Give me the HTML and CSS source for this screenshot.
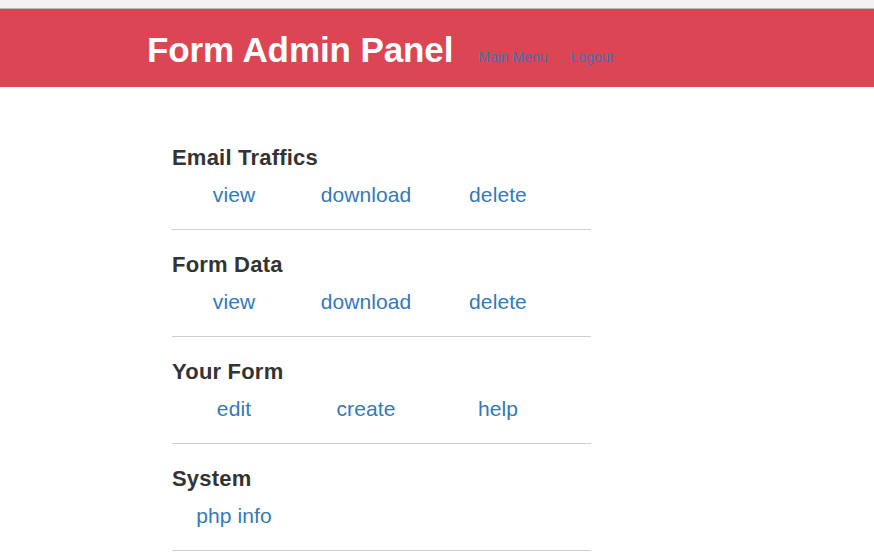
FILE: index.html
```html
<!DOCTYPE html>
<html lang="en">
<head>
<meta charset="utf-8">
<title>Form Admin Panel</title>
<link rel="stylesheet" href="styles.css">
</head>
<body>
<div class="topstrip"></div>
<header class="header">
  <h1 class="title">Form Admin Panel</h1>
  <nav class="nav">
    <a href="#" class="nav-link">Main Menu</a>
    <a href="#" class="nav-link">Logout</a>
  </nav>
</header>
<main class="main">
  <section class="section">
    <h2 class="section-title">Email Traffics</h2>
    <div class="links">
      <a href="#" class="link">view</a>
      <a href="#" class="link">download</a>
      <a href="#" class="link">delete</a>
    </div>
  </section>
  <section class="section">
    <h2 class="section-title">Form Data</h2>
    <div class="links">
      <a href="#" class="link">view</a>
      <a href="#" class="link">download</a>
      <a href="#" class="link">delete</a>
    </div>
  </section>
  <section class="section">
    <h2 class="section-title">Your Form</h2>
    <div class="links">
      <a href="#" class="link">edit</a>
      <a href="#" class="link">create</a>
      <a href="#" class="link">help</a>
    </div>
  </section>
  <section class="section">
    <h2 class="section-title">System</h2>
    <div class="links">
      <a href="#" class="link">php info</a>
    </div>
  </section>
</main>
</body>
</html>
```

FILE: styles.css
```css
html, body {
  margin: 0;
  padding: 0;
  background: #ffffff;
  font-family: "Liberation Sans", Arial, sans-serif;
}

.topstrip {
  height: 8px;
  background: #f2f2f2;
  border-bottom: 1px solid #b9b9b9;
}

.header {
  height: 78px;
  background: #db4554;
  display: flex;
  align-items: baseline;
  padding: 23px 0 0 147px;
  box-sizing: border-box;
}

.title {
  margin: 0;
  font-size: 35px;
  line-height: 35px;
  font-weight: bold;
  color: #ffffff;
  letter-spacing: -0.1px;
}

.nav {
  display: flex;
  gap: 23px;
  margin-left: 25px;
}

.nav-link {
  font-size: 14px;
  color: #4670b3;
  text-decoration: none;
}

.main {
  padding-top: 36px;
  margin-left: 172px;
  width: 419px;
}

.section {
  padding: 22px 0 21px;
  border-bottom: 1px solid #cfcfcf;
}

.section-title {
  margin: 0 0 11px;
  font-size: 22px;
  line-height: 26px;
  font-weight: bold;
  color: #333333;
  letter-spacing: 0.2px;
}

.links {
  display: grid;
  grid-template-columns: repeat(3, 124px);
  column-gap: 8px;
}

.link {
  font-size: 21px;
  line-height: 26px;
  color: #337ab7;
  text-decoration: none;
  text-align: center;
  letter-spacing: 0.1px;
}
```
